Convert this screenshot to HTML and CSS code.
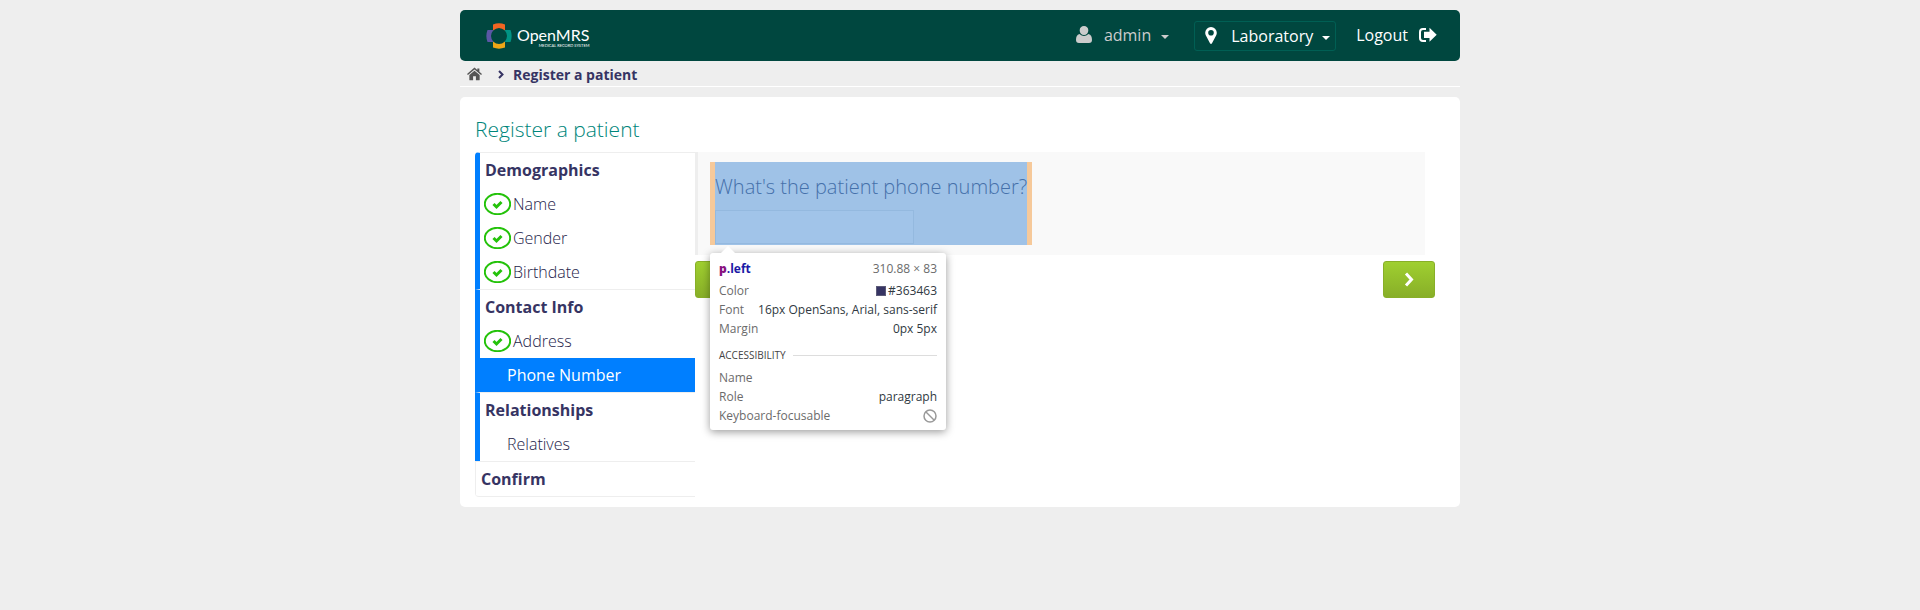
FILE: index.html
```html
<!DOCTYPE html>
<html lang="en">
<head>
<meta charset="utf-8">
<title>Register a patient</title>
<link rel="stylesheet" href="styles.css">
</head>
<body>
<div class="page">
  <header class="topbar">
    <a class="logo" href="#" aria-label="OpenMRS home">
      <svg class="logo-mark" viewBox="0 0 26 26" aria-hidden="true">
        <path fill="#f26522" d="M7 1.500Q13-.800 19 1.500V7.500Q13 2.500 7 7.500z"/>
        <path fill="#009384" d="M24.500 7Q26.800 13 24.500 19H18.500Q23.500 13 18.500 7z"/>
        <path fill="#eea616" d="M7 24.500Q13 26.800 19 24.500V18.500Q13 23.500 7 18.500z"/>
        <path fill="#5b57a6" d="M1.500 7Q-.800 13 1.500 19H7.500Q2.500 13 7.500 7z"/>
      </svg>
      <span class="logo-text"><span class="logo-name">OpenMRS</span><span class="logo-tag">MEDICAL RECORD SYSTEM</span></span>
    </a>
    <nav class="user-nav">
      <button class="nav-user" type="button">
        <svg class="user-icon" viewBox="0 0 16 17" aria-hidden="true"><path fill="currentColor" d="M8 0a4.300 4.300 0 0 1 4.300 4.500C12.300 7 10.500 9 8 9S3.700 7 3.700 4.500A4.300 4.300 0 0 1 8 0zM3.500 8Q8 12 12.500 8C15 8.500 16 11 16 14q0 3-3 3H3q-3 0-3-3c0-3 1-5.500 3.500-6z"/></svg>
        <span>admin</span><i class="caret"></i>
      </button>
      <button class="nav-location" type="button">
        <svg class="pin-icon" viewBox="0 0 12 17" aria-hidden="true"><path fill="currentColor" fill-rule="evenodd" d="M6 0a5.800 5.800 0 0 1 5.800 5.800c0 1.200-.3 2-.7 2.800L7 16.300q-1 1.400-2 0L.9 8.600C.5 7.800.2 7 .2 5.800A5.800 5.800 0 0 1 6 0zm0 3a2.800 2.800 0 1 0 0 5.600A2.800 2.800 0 0 0 6 3z"/></svg>
        <span>Laboratory</span><i class="caret"></i>
      </button>
      <a class="nav-logout" href="#"><span>Logout</span>
        <svg class="logout-icon" viewBox="0 0 18 16" aria-hidden="true"><path fill="none" stroke="currentColor" stroke-width="2" d="M7 2H4Q1 2 1 5v6q0 3 3 3h3"/><path fill="currentColor" d="M10.500 .8l7.200 7-7.200 7V11H5V4.800h5.500z"/></svg>
      </a>
    </nav>
  </header>
  <nav class="breadcrumbs">
    <a class="home" href="#" aria-label="Home"><svg viewBox="0 0 16 14" aria-hidden="true"><path fill="currentColor" d="M8 3.500l5.500 4.600V13q0 .7-.7.700H9.500V9.500h-3v4.200H3.200q-.7 0-.7-.7V8.100zM8 .1l3 2.500V1h2.200v3.500L16 6.900l-1 1.200L8 2.300 1 8.100 0 6.900z"/></svg></a>
    <svg class="crumb-arrow" viewBox="0 0 6 9" aria-hidden="true"><path fill="none" stroke="currentColor" stroke-width="2" d="M1 1l3.500 3.500L1 8"/></svg>
    <span>Register a patient</span>
  </nav>
  <main class="content">
    <h1 class="title">Register a patient</h1>
    <div class="wizard">
      <ul class="steps">
        <li class="section done">
          <span class="section-name">Demographics</span>
          <ul>
            <li class="step"><svg class="tick" viewBox="0 0 27 22" aria-hidden="true"><ellipse cx="13.500" cy="11" rx="12.700" ry="10.200"/><path d="M9.500 11l3 3 5-5"/></svg>Name</li>
            <li class="step"><svg class="tick" viewBox="0 0 27 22" aria-hidden="true"><ellipse cx="13.500" cy="11" rx="12.700" ry="10.200"/><path d="M9.500 11l3 3 5-5"/></svg>Gender</li>
            <li class="step"><svg class="tick" viewBox="0 0 27 22" aria-hidden="true"><ellipse cx="13.500" cy="11" rx="12.700" ry="10.200"/><path d="M9.500 11l3 3 5-5"/></svg>Birthdate</li>
          </ul>
        </li>
        <li class="section done">
          <span class="section-name">Contact Info</span>
          <ul>
            <li class="step"><svg class="tick" viewBox="0 0 27 22" aria-hidden="true"><ellipse cx="13.500" cy="11" rx="12.700" ry="10.200"/><path d="M9.500 11l3 3 5-5"/></svg>Address</li>
            <li class="step pending current">Phone Number</li>
          </ul>
        </li>
        <li class="section done">
          <span class="section-name">Relationships</span>
          <ul><li class="step pending">Relatives</li></ul>
        </li>
        <li class="section"><span class="section-name">Confirm</span></li>
      </ul>
      <form class="form">
        <div class="panel">
          <div class="inspected">
            <label class="question" for="phone">What's the patient phone number?</label>
            <input class="phone" id="phone" type="tel">
            <aside class="tooltip">
              <div class="tip-row tip-head"><strong><b class="tag">p</b>.left</strong><span>310.88 × 83</span></div>
              <div class="tip-row"><span>Color</span><span class="value"><i class="swatch"></i>#363463</span></div>
              <div class="tip-row"><span>Font</span><span class="value">16px OpenSans, Arial, sans-serif</span></div>
              <div class="tip-row"><span>Margin</span><span class="value">0px 5px</span></div>
              <div class="tip-divider">ACCESSIBILITY</div>
              <div class="tip-row"><span>Name</span></div>
              <div class="tip-row"><span>Role</span><span class="value">paragraph</span></div>
              <div class="tip-row"><span>Keyboard-focusable</span><svg class="no-icon" viewBox="0 0 14 14" aria-label="No"><circle cx="7" cy="7" r="6"/><path d="M3 3l8 8"/></svg></div>
            </aside>
          </div>
        </div>
        <div class="actions">
          <button class="btn" type="button" aria-label="Previous"><svg viewBox="0 0 10 15" aria-hidden="true"><path d="M8 2L3 7.500 8 13"/></svg></button>
          <button class="btn" type="button" aria-label="Next"><svg viewBox="0 0 10 15" aria-hidden="true"><path d="M2 1.500l5.500 6L2 13.500"/></svg></button>
        </div>
      </form>
    </div>
  </main>
</div>
</body>
</html>
```
FILE: styles.css
```css
* { box-sizing: border-box; }
body {
  margin: 0;
  padding: 10px 0;
  background: #eee;
  color: #363463;
  font: 300 16px/24px "Open Sans", Arial, sans-serif;
}
ul { list-style: none; margin: 0; padding: 0; }
button { font: inherit; color: inherit; background: none; border: 0; padding: 0; }
a { color: inherit; text-decoration: none; }
svg { display: block; flex: none; }
.page { max-width: 1000px; margin: 0 auto; }

.topbar {
  display: flex;
  justify-content: space-between;
  align-items: center;
  height: 51px;
  padding: 0 23px 0 26px;
  border-radius: 5px;
  background: #00473f;
  color: #fff;
  font-weight: 400;
}
.logo { display: flex; align-items: center; gap: 5px; }
.logo-mark { width: 26px; height: 26px; }
.logo-text { display: flex; flex-direction: column; padding-top: 4px; }
.logo-name { font: 400 16px/16px Lato, sans-serif; }
.logo-tag { font: 400 4px/5px Lato, sans-serif; align-self: flex-end; }
.user-nav { display: flex; align-items: center; }
.user-nav > * { display: flex; align-items: center; }
.nav-user { color: #ccc; gap: 12px; margin: 0 25px 2px 0; }
.user-icon { width: 16px; height: 17px; }
.caret { border: 4px solid transparent; border-top-color: currentColor; border-bottom: 0; margin-top: 4px; }
.nav-user .caret { margin-left: -2px; }
.nav-location {
  gap: 14px;
  height: 30px;
  padding: 0 5px 0 10px;
  margin-right: 20px;
  border: 1px solid #005f54;
  border-radius: 3px;
}
.nav-location .caret { margin-left: -5px; }
.pin-icon { width: 12px; height: 17px; }
.nav-logout { gap: 11px; margin-bottom: 2px; }
.logout-icon { width: 18px; height: 16px; }

.breadcrumbs {
  display: flex;
  align-items: center;
  height: 26px;
  padding: 2px 7px 0;
  border-bottom: 1px solid #fff;
  font-size: 14px;
  font-weight: 700;
}
.home { color: #555; width: 15px; margin-right: 16px; }
.home svg { width: 15px; height: 14px; margin-bottom: 2px; }
.crumb-arrow { width: 6px; height: 9px; margin-right: 9px; }

.content {
  margin-top: 10px;
  padding: 16px 15px 10px;
  border-radius: 5px;
  background: #fff;
}
.title { margin: 0 0 7px; font-size: 21px; line-height: 32px; font-weight: 300; color: #00857a; }
.wizard { display: flex; align-items: flex-start; }
.steps {
  width: 220px;
  flex: none;
  border: 1px solid #eee;
  border-width: 0 0 1px;
  border-radius: 4px 0 0 4px;
  overflow: hidden;
}
.section { border-top: 1px solid #eee; border-left: 1px solid #eee; line-height: 34px; }
.section.done { border-left: 5px solid #007fff; }
.section-name { display: block; padding-left: 5px; font-weight: 700; }
.step { display: flex; align-items: center; gap: 2px; height: 34px; padding-left: 4px; color: #25234a; }
.step.pending { padding-left: 27px; }
.step.current { background: #007fff; color: #fff; font-weight: 400; }
.tick { width: 27px; height: 22px; fill: none; stroke: #24c20a; stroke-width: 2; }
.tick path { stroke-width: 3; }

.form { flex: 1; min-width: 0; }
.panel {
  display: flex;
  margin-right: 20px;
  padding: 10px 12px;
  border-left: 3px solid #eee;
  background: #f9f9f9;
}
.inspected {
  position: relative;
  height: 83px;
  border: solid #f6c99a;
  border-width: 0 5px;
  background: #9fc2e7;
}
.question { display: block; padding-top: 10px; font-size: 20px; line-height: 30px; color: #4570aa; }
.phone {
  display: block;
  width: 199px;
  height: 34px;
  margin-top: 8px;
  border: 1px solid #94b9df;
  background: #a1c4e9;
}
.tooltip {
  position: absolute;
  z-index: 2;
  top: 91px;
  left: -5px;
  width: 236px;
  padding: 6px 9px 5px;
  border-radius: 3px;
  background: #fff;
  color: #6b6b6b;
  box-shadow: 0 2px 8px rgba(0, 0, 0, .4);
  font: 400 12px/19px "Open Sans", sans-serif;
}
.tooltip::before {
  content: "";
  position: absolute;
  top: -7px;
  left: 11px;
  border: 7px solid transparent;
  border-top: 0;
  border-bottom-color: #fff;
}
.tip-row { display: flex; justify-content: space-between; align-items: center; white-space: nowrap; }
.tip-head { margin-bottom: 3px; }
.tip-head strong { color: #1a1aa6; }
.tag { color: #881280; }
.value { display: flex; align-items: center; gap: 2px; color: #303942; }
.swatch { width: 10px; height: 10px; background: #363463; border: 1px solid #5c5b78; }
.tip-divider { display: flex; align-items: center; gap: 7px; margin: 8px 0 3px; font-size: 10px; color: #444; }
.tip-divider::after { content: ""; flex: 1; height: 1px; background: #ddd; }
.no-icon { width: 14px; height: 14px; fill: none; stroke: #999; stroke-width: 1.500; }

.actions { display: flex; justify-content: space-between; margin: 6px 10px 0 0; }
.btn {
  display: flex;
  align-items: center;
  justify-content: center;
  width: 52px;
  height: 37px;
  border: 1px solid #88af28;
  border-radius: 3px;
  background: linear-gradient(#9fcf30, #88af28);
  color: #fff;
}
.btn svg { width: 10px; height: 15px; fill: none; stroke: currentColor; stroke-width: 3; }
```
